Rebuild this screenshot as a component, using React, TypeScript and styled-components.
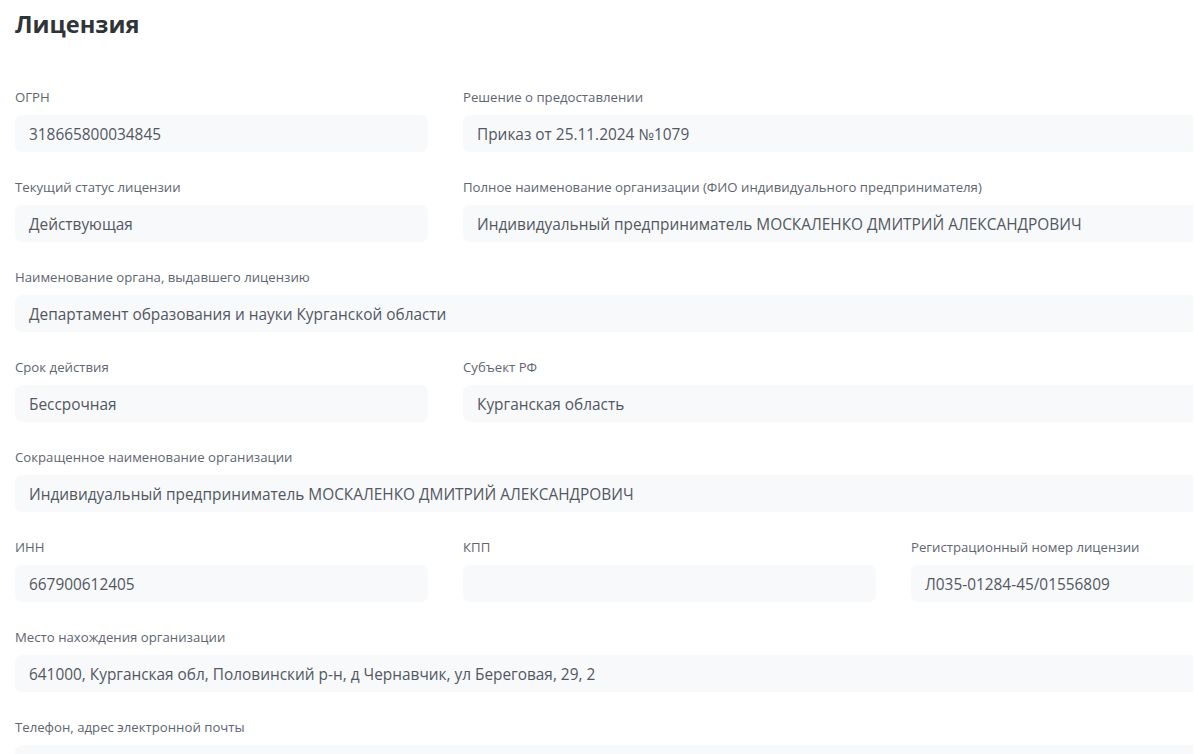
import React from "react";
import styled, { createGlobalStyle } from "styled-components";

const Global = createGlobalStyle`
  html, body {
    margin: 0;
    padding: 0;
    background: #ffffff;
    overflow: hidden;
  }
  body {
    font-family: "Open Sans", "Noto Sans", sans-serif;
    -webkit-font-smoothing: antialiased;
  }
`;

const Page = styled.div`
  width: 1193px;
  overflow: hidden;
  padding: 8px 0 0 15px;
  box-sizing: border-box;
`;

const Title = styled.h1`
  margin: 0 0 48px;
  font-size: 23.6px;
  line-height: 32px;
  font-weight: 700;
  color: #2f3438;
`;

const Grid = styled.div`
  display: grid;
  grid-template-columns: repeat(3, 413px);
  column-gap: 35px;
  row-gap: 26px;
  width: 1309px;
`;

const Field = styled.div<{ $span?: number }>`
  grid-column: span ${(p) => p.$span ?? 1};
  display: flex;
  flex-direction: column;
  gap: 9px;
`;

const Label = styled.div`
  font-size: 13.2px;
  line-height: 18px;
  color: #5e6670;
`;

const Value = styled.div`
  height: 37px;
  box-sizing: border-box;
  padding: 1px 14px 0;
  display: flex;
  align-items: center;
  background: #f8f9fb;
  border-radius: 7px;
  font-size: 15.4px;
  color: #52585f;
  white-space: nowrap;
`;

type Item = { label: string; value: string; span?: number };

const rows: Item[] = [
  { label: "ОГРН", value: "318665800034845" },
  { label: "Решение о предоставлении", value: "Приказ от 25.11.2024 №1079", span: 2 },
  { label: "Текущий статус лицензии", value: "Действующая" },
  {
    label: "Полное наименование организации (ФИО индивидуального предпринимателя)",
    value: "Индивидуальный предприниматель МОСКАЛЕНКО ДМИТРИЙ АЛЕКСАНДРОВИЧ",
    span: 2,
  },
  {
    label: "Наименование органа, выдавшего лицензию",
    value: "Департамент образования и науки Курганской области",
    span: 3,
  },
  { label: "Срок действия", value: "Бессрочная" },
  { label: "Субъект РФ", value: "Курганская область", span: 2 },
  {
    label: "Сокращенное наименование организации",
    value: "Индивидуальный предприниматель МОСКАЛЕНКО ДМИТРИЙ АЛЕКСАНДРОВИЧ",
    span: 3,
  },
  { label: "ИНН", value: "667900612405" },
  { label: "КПП", value: "" },
  { label: "Регистрационный номер лицензии", value: "Л035-01284-45/01556809" },
  {
    label: "Место нахождения организации",
    value: "641000, Курганская обл, Половинский р-н, д Чернавчик, ул Береговая, 29, 2",
    span: 3,
  },
  { label: "Телефон, адрес электронной почты", value: "", span: 3 },
];

export default function App() {
  return (
    <>
      <Global />
      <Page>
        <Title>Лицензия</Title>
        <Grid>
          {rows.map((r, i) => (
            <Field key={i} $span={r.span}>
              <Label>{r.label}</Label>
              <Value>{r.value}</Value>
            </Field>
          ))}
        </Grid>
      </Page>
    </>
  );
}
